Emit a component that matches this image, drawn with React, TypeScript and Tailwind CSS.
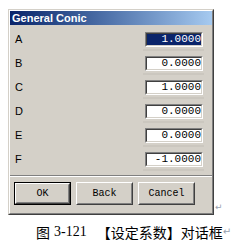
// General Conic coefficient dialog (classic Windows look) with document caption

const ROWS = [
  { label: 'A', value: '1.0000', active: true },
  { label: 'B', value: '0.0000' },
  { label: 'C', value: '1.0000' },
  { label: 'D', value: '0.0000' },
  { label: 'E', value: '0.0000' },
  { label: 'F', value: '-1.0000' },
];

const BUTTONS = [
  { label: 'OK', isDefault: true },
  { label: 'Back' },
  { label: 'Cancel' },
];

function Field({ value, active }: { value: string; active?: boolean }) {
  return (
    <div className="w-[58px] h-[15px] border border-t-[#808080] border-l-[#808080] border-b-white border-r-white">
      <div className="w-full h-full border border-t-[#404040] border-l-[#404040] border-b-[#d4d0c8] border-r-[#d4d0c8] bg-white">
        {active ? (
          <div className="h-full flex items-center justify-end bg-[#0a246a] text-white leading-none pr-[0px]">
            {value}
          </div>
        ) : (
          <div className="h-full flex items-center justify-end text-black leading-none">
            {value}
          </div>
        )}
      </div>
    </div>
  );
}

function Button({ label, isDefault }: { label: string; isDefault?: boolean }) {
  if (isDefault) {
    return (
      <div className="w-[57px] h-[23px] border border-black">
        <div className="w-full h-full border border-t-white border-l-white border-b-[#404040] border-r-[#404040]">
          <div className="w-full h-full border border-t-[#d4d0c8] border-l-[#d4d0c8] border-b-[#808080] border-r-[#808080] flex items-center justify-center">
            {label}
          </div>
        </div>
      </div>
    );
  }
  return (
    <div className="w-[57px] h-[23px] border border-t-white border-l-white border-b-[#404040] border-r-[#404040]">
      <div className="w-full h-full border border-t-[#d4d0c8] border-l-[#d4d0c8] border-b-[#808080] border-r-[#808080] flex items-center justify-center">
        {label}
      </div>
    </div>
  );
}

function Dialog() {
  return (
    <div className="w-[206px] h-[206px] border border-t-[#d4d0c8] border-l-[#d4d0c8] border-b-[#404040] border-r-[#404040] bg-[#d4d0c8]">
      <div className="w-full h-full flex flex-col border border-t-white border-l-white border-b-[#808080] border-r-[#808080]">
        {/* Title bar */}
        <div className="h-[14px] flex items-center pl-[2px] bg-gradient-to-r from-[#0a246a] to-[#a6caf0]">
          <span className="text-white font-bold text-[11px] leading-none font-['Liberation_Sans',Arial,sans-serif]">
            General Conic
          </span>
        </div>

        {/* Coefficient rows */}
        <div className="flex flex-col gap-[9px] pt-[7px] pl-[5px] pr-[9px]">
          {ROWS.map(row => (
            <div key={row.label} className="relative flex items-center justify-between h-[15px]">
              <span className="text-[11px] leading-none text-black font-['Liberation_Sans',Arial,sans-serif]">
                {row.label}
              </span>
              <div className="text-[11px] font-['Liberation_Mono','Courier_New',monospace]">
                <Field value={row.value} active={row.active} />
              </div>
              <div className="absolute right-[-1px] top-[17px] w-[61px] h-[2px] bg-[#cbc7bf]" />
            </div>
          ))}
        </div>

        {/* Separator */}
        <div className="mt-[8px]">
          <div className="h-px bg-[#808080]" />
          <div className="h-px bg-white" />
        </div>

        {/* Buttons */}
        <div className="flex gap-[5px] pl-[4px] mt-[5px] text-[10px] text-black font-['Liberation_Mono','Courier_New',monospace]">
          {BUTTONS.map(b => (
            <Button key={b.label} label={b.label} isDefault={b.isDefault} />
          ))}
        </div>
      </div>
    </div>
  );
}

export default function App() {
  return (
    <div className="w-[242px] h-[246px] bg-white overflow-hidden">
      <div className="flex items-end pl-[8px] pt-[9px]">
        <Dialog />
        <span className="ml-[1px] mb-[3px] text-[9px] leading-none text-gray-400 font-['DejaVu_Sans',sans-serif]">↵</span>
      </div>

      {/* Caption */}
      <div className="mt-[9px] pl-[36px] h-[16px] flex items-center text-[14px] leading-none text-black font-['Liberation_Serif','Noto_Sans_CJK_SC',serif]">
        <span className="font-['Noto_Sans_CJK_SC',sans-serif]">图</span>
        <span className="ml-[4px]">3-121</span>
        <span className="ml-[10px] font-['Noto_Sans_CJK_SC',sans-serif]">【设定系数】对话框</span>
        <span className="text-[10px] text-gray-400 font-['DejaVu_Sans',sans-serif]">↵</span>
      </div>
    </div>
  );
}
